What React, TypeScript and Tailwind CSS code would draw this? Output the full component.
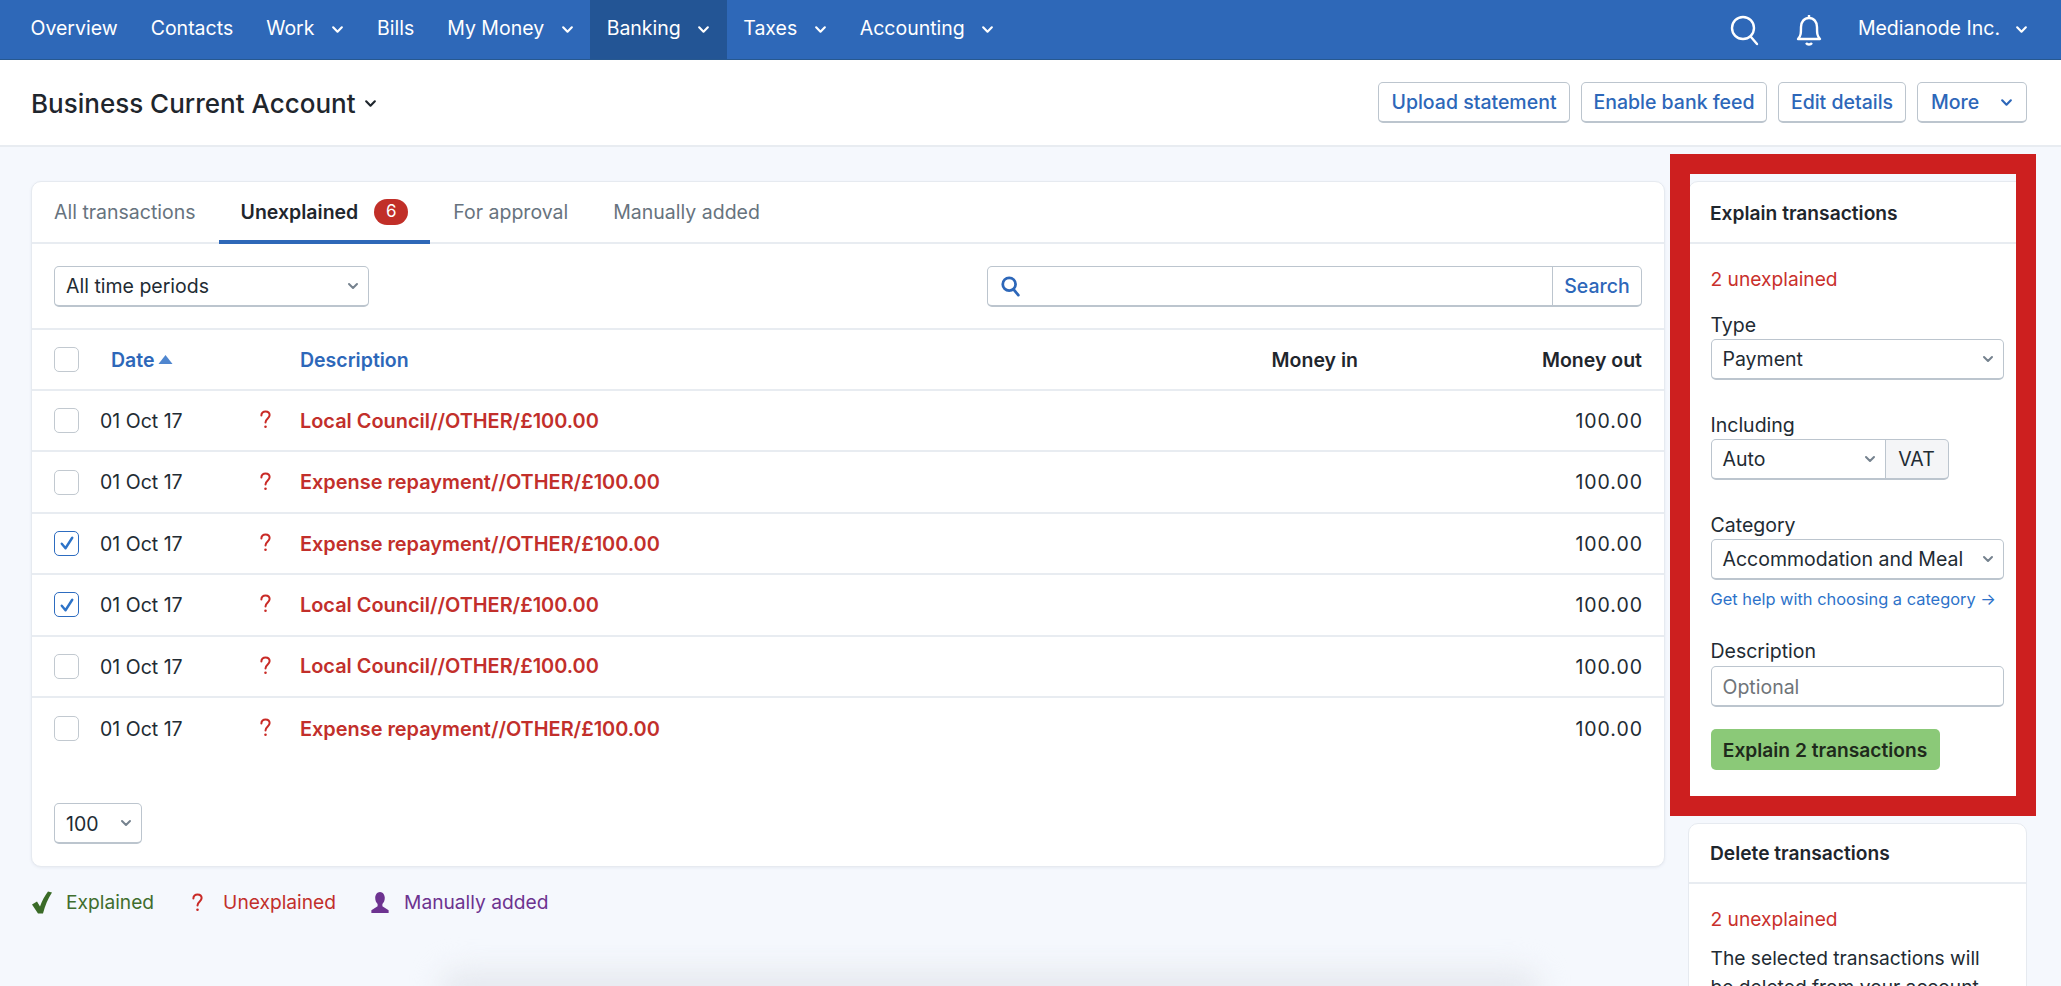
import React from "react";

const Chev = ({ className = "" }: { className?: string }) => (
  <svg viewBox="0 0 12 8" className={className} fill="none" stroke="currentColor" strokeWidth="2" strokeLinecap="round" strokeLinejoin="round">
    <path d="M2 2l4 4 4-4" />
  </svg>
);

const Question = ({ className = "" }: { className?: string }) => (
  <svg viewBox="0 0 12 20" className={"w-[11px] h-[19px] shrink-0 " + className} fill="none" stroke="#c92a26" strokeWidth="2.2" strokeLinecap="round">
    <path d="M1.500 5.500C1.500 2.800 3.500 1.200 6 1.200s4.500 1.500 4.500 4c0 3.500-4.500 3.800-4.500 8" />
    <circle cx="6" cy="18" r="1.400" fill="#c92a26" stroke="none" />
  </svg>
);

const Check = () => (
  <svg viewBox="0 0 24 24" className="w-[18px] h-[18px]" fill="none" stroke="#2d73c8" strokeWidth="3.200" strokeLinecap="round" strokeLinejoin="round">
    <path d="M5 13l5 6L19 5" />
  </svg>
);

const Box = ({ checked = false }: { checked?: boolean }) => (
  <span className={"w-[25px] h-[25px] rounded-[5px] bg-white flex items-center justify-center border-[1.5px] shrink-0 " + (checked ? "border-[#2d6cc0]" : "border-[#c2c9d0]")}>
    {checked && <Check />}
  </span>
);

const NavItem = ({ label, chev, active }: { label: string; chev?: boolean; active?: boolean }) => (
  <div className={"h-full flex items-center px-[16.5px] gap-[16.5px] " + (active ? "bg-[#235595]" : "")}>
    <span className="pb-[2px]">{label}</span>
    {chev && <Chev className="w-[13px] h-[9px]" />}
  </div>
);

const Btn = ({ label, chev, w }: { label: string; chev?: boolean; w: string }) => (
  <div className={"h-[41px] rounded-[5px] border border-[#bcc5ce] border-b-2 bg-white flex items-center justify-center gap-[21px] font-medium text-[#2d67b9] " + w}>
    <span className="pt-[2px]">{label}</span>
    {chev && <Chev className="w-[13px] h-[9px]" />}
  </div>
);

const Select = ({ label, w, className = "" }: { label: string; w: string; className?: string }) => (
  <div className={"h-[41px] rounded-[5px] border border-[#bcc5ce] border-b-2 bg-white flex items-center justify-between pl-[11px] pr-[9px] text-[#222b33] " + w + " " + className}>
    <span className="whitespace-nowrap pt-[2px]">{label}</span>
    <Chev className="w-[12px] h-[8px] text-[#75828e] shrink-0" />
  </div>
);

const rows = [
  { d: "Local Council//OTHER/£100.00", c: false },
  { d: "Expense repayment//OTHER/£100.00", c: false },
  { d: "Expense repayment//OTHER/£100.00", c: true },
  { d: "Local Council//OTHER/£100.00", c: true },
  { d: "Local Council//OTHER/£100.00", c: false },
  { d: "Expense repayment//OTHER/£100.00", c: false },
];

const Tab = ({ label }: { label: string }) => (
  <div className="h-full flex items-center text-[#67737e] pt-[2px]">{label}</div>
);

export default function App() {
  return (
    <div className="h-screen overflow-hidden bg-[#f5f8fd] font-['Inter',sans-serif] text-[19.5px] text-[#222b33] relative">
      <div className="h-[60px] bg-[#2e68b8] border-b border-[#27588f] text-white flex items-center pl-[14px] pr-[33px]">
        <NavItem label="Overview" />
        <NavItem label="Contacts" />
        <NavItem label="Work" chev />
        <NavItem label="Bills" />
        <NavItem label="My Money" chev />
        <NavItem label="Banking" chev active />
        <NavItem label="Taxes" chev />
        <NavItem label="Accounting" chev />
        <div className="ml-auto flex items-center">
          <svg viewBox="0 0 32 32" className="w-[32px] h-[32px] mr-[32px]" fill="none" stroke="white" strokeWidth="2.4" strokeLinecap="round">
            <circle cx="14" cy="14" r="11" />
            <path d="M22 23l6 7" />
          </svg>
          <svg viewBox="0 0 32 34" className="w-[32px] h-[34px] mr-[33px]" fill="none" stroke="white" strokeWidth="2.4" strokeLinejoin="round">
            <path d="M5 26c3-3 3-6 3-12 0-5 3-9 8-9s8 4 8 9c0 6 0 9 3 12z" />
            <path d="M13 30c1.500 2 4.500 2 6 0M16 2v3" />
          </svg>
          <span className="pb-[2px]">Medianode Inc.</span>
          <Chev className="w-[13px] h-[9px] ml-[15px]" />
        </div>
      </div>

      <div className="h-[87px] bg-white border-b-2 border-[#e8ecf1] flex items-center justify-between pl-[31px] pr-[34px]">
        <div className="flex items-center gap-[8px] text-[26px] font-medium text-[#1f262d] pt-[2px]">
          <span>Business Current Account</span>
          <Chev className="w-[13px] h-[9px]" />
        </div>
        <div className="flex gap-[11px]">
          <Btn label="Upload statement" w="w-[192px]" />
          <Btn label="Enable bank feed" w="w-[186px]" />
          <Btn label="Edit details" w="w-[128px]" />
          <Btn label="More" chev w="w-[110px]" />
        </div>
      </div>

      <div className="flex pl-[31px] pr-[34px] pt-[34px] gap-[23px] items-start">
        <div className="flex-1 min-w-0">
          <div className="bg-white rounded-[10px] border border-[#e6eaf0] shadow-[0_1px_3px_rgba(60,80,120,0.08)] h-[686px]">
            <div className="h-[62px] border-b-2 border-[#e8ecf1] flex items-stretch pl-[22px] gap-[45px]">
              <Tab label="All transactions" />
              <div className="h-full flex items-center relative gap-[16px] font-semibold text-[#1f262d]">
                <span className="pt-[2px]">Unexplained</span>
                <span className="w-[34px] h-[26px] rounded-full bg-[#c12f28] text-white text-[17px] font-normal flex items-center justify-center">6</span>
                <span className="absolute left-[-22px] right-[-22px] bottom-[-2px] h-[4px] bg-[#2e68b8]"></span>
              </div>
              <Tab label="For approval" />
              <Tab label="Manually added" />
            </div>
            <div className="h-[86px] border-b-2 border-[#e8ecf1] flex items-center justify-between pl-[22px] pr-[22px]">
              <Select label="All time periods" w="w-[315px]" />
              <div className="w-[655px] h-[41px] rounded-[5px] border border-[#bcc5ce] border-b-2 flex items-center">
                <svg viewBox="0 0 24 24" className="w-[22px] h-[22px] ml-[12px]" fill="none" stroke="#2d67b9" strokeWidth="3" strokeLinecap="round">
                  <circle cx="10" cy="10" r="7" />
                  <path d="M15 16l5 6" />
                </svg>
                <input className="flex-1 min-w-0 outline-none bg-transparent" />
                <div className="h-full w-[89px] border-l border-[#bcc5ce] flex items-center justify-center font-medium text-[#2d67b9] pt-[2px]">Search</div>
              </div>
            </div>
            <div className="h-[61px] border-b-2 border-[#e8ecf1] flex items-center pl-[22px] pr-[22px] font-semibold">
              <Box />
              <div className="w-[222px] ml-[32px] flex items-center gap-[3px] text-[#2d67b9]">
                <span className="pt-[2px]">Date</span>
                <svg viewBox="0 0 14 9" className="w-[15px] h-[9px]"><path d="M7 0l7 9H0z" fill="#4f86cf" /></svg>
              </div>
              <div className="flex-1 text-[#2d67b9] -ml-[33px] pt-[2px]">Description</div>
              <div className="w-[150px] text-right text-[#1f262d] pt-[2px]">Money in</div>
              <div className="w-[284px] text-right text-[#1f262d] pt-[2px]">Money out</div>
            </div>
            {rows.map((r, i) => (
              <div key={i} className={"h-[61.4px] flex items-center pl-[22px] pr-[22px] " + (i < 5 ? "border-b-2 border-[#e8ecf1]" : "")}>
                <Box checked={r.c} />
                <div className="w-[160px] ml-[21px] shrink-0 pt-[2px]">01 Oct 17</div>
                <Question className="-mt-[2px]" />
                <div className="flex-1 ml-[29px] font-semibold text-[19.9px] text-[#c22f2b] pt-[2px]">{r.d}</div>
                <div className="text-right tracking-[0.05em] mr-[-1px] pt-[2px]">100.00</div>
              </div>
            ))}
            <div className="pl-[22px] pt-[44px]">
              <Select label="100" w="w-[88px]" />
            </div>
          </div>
          <div className="flex items-center mt-[21px] h-[28px] text-[19.2px]">
            <svg viewBox="0 0 20 24" className="w-[20px] h-[25px] ml-[1px]"><path d="M0 14l5-3 3 5C10 10 13 5 16 1l4 1c-4 6-7 13-9 21H6z" fill="#3a6b27" /></svg>
            <span className="ml-[14px] text-[#3f6e2e]">Explained</span>
            <Question className="ml-[38px]" />
            <span className="ml-[20px] text-[#c22f2b]">Unexplained</span>
            <svg viewBox="0 0 20 24" className="w-[22px] h-[23px] ml-[33px]"><path d="M10 1c3 0 5 3 5 6 0 3-1 5-2.500 6.500V16l6.500 4v3H1v-3l6.500-4v-2.500C6 12 5 10 5 7c0-3 2-6 5-6z" fill="#6d3390" /></svg>
            <span className="ml-[13px] text-[#6d3390]">Manually added</span>
          </div>
        </div>

        <div className="w-[339px] shrink-0">
          <div className="bg-white rounded-[10px] border border-[#e6eaf0] h-[620px] mb-[22px]">
            <div className="h-[62px] border-b-2 border-[#e8ecf1] flex items-center pl-[21px] pt-[2px] font-semibold text-[19.2px] text-[#1f262d]">Explain transactions</div>
            <div className="pl-[21.5px] pr-[22px] pt-[23px]">
              <div className="text-[#c9302c] leading-[24px] text-[19.2px]">2 unexplained</div>
              <div className="mt-[22px] leading-[24px]">Type</div>
              <Select label="Payment" w="w-[293px]" className="mt-[2px]" />
              <div className="mt-[33px] leading-[24px]">Including</div>
              <div className="flex mt-[2px]">
                <Select label="Auto" w="w-[175px]" className="rounded-r-none" />
                <div className="w-[63px] h-[41px] border border-l-0 border-b-2 border-[#bcc5ce] rounded-r-[5px] bg-[#f4f5f7] flex items-center justify-center pt-[2px]">VAT</div>
              </div>
              <div className="mt-[33px] leading-[24px]">Category</div>
              <Select label="Accommodation and Meal" w="w-[293px]" className="mt-[2px]" />
              <div className="mt-[8px] text-[16.4px] text-[#2d72c9] whitespace-nowrap leading-[22px]">Get help with choosing a category →</div>
              <div className="mt-[29px] leading-[24px]">Description</div>
              <input placeholder="Optional" className="w-[293px] h-[41px] mt-[3px] rounded-[5px] border border-[#bcc5ce] border-b-2 px-[11px] pt-[2px] outline-none placeholder:text-[#6f7479]" />
              <div className="mt-[22px] w-[229px] h-[41px] rounded-[5px] bg-[#8bc978] flex items-center justify-center font-semibold text-[#1f2a1c] text-[19.2px] pt-[2px]">Explain 2 transactions</div>
            </div>
          </div>
          <div className="bg-white rounded-t-[10px] border border-[#e6eaf0] h-[300px]">
            <div className="h-[60px] border-b-2 border-[#e8ecf1] flex items-center pl-[21px] font-semibold text-[#1f262d] text-[19.2px]">Delete transactions</div>
            <div className="pl-[21.5px] pr-[20px] pt-[23px] text-[19.2px]">
              <div className="text-[#c9302c] leading-[24px]">2 unexplained</div>
              <div className="mt-[13px] leading-[29px]">The selected transactions will be deleted from your account</div>
            </div>
          </div>
        </div>
      </div>

      <div className="absolute left-[1670px] top-[154px] w-[366px] h-[662px] border-[20px] border-[#cd1f1f] pointer-events-none"></div>
      <div className="absolute left-[440px] w-[1100px] -bottom-[24px] h-[40px] bg-[#e6e9ef] blur-[14px] rounded-full"></div>
    </div>
  );
}
